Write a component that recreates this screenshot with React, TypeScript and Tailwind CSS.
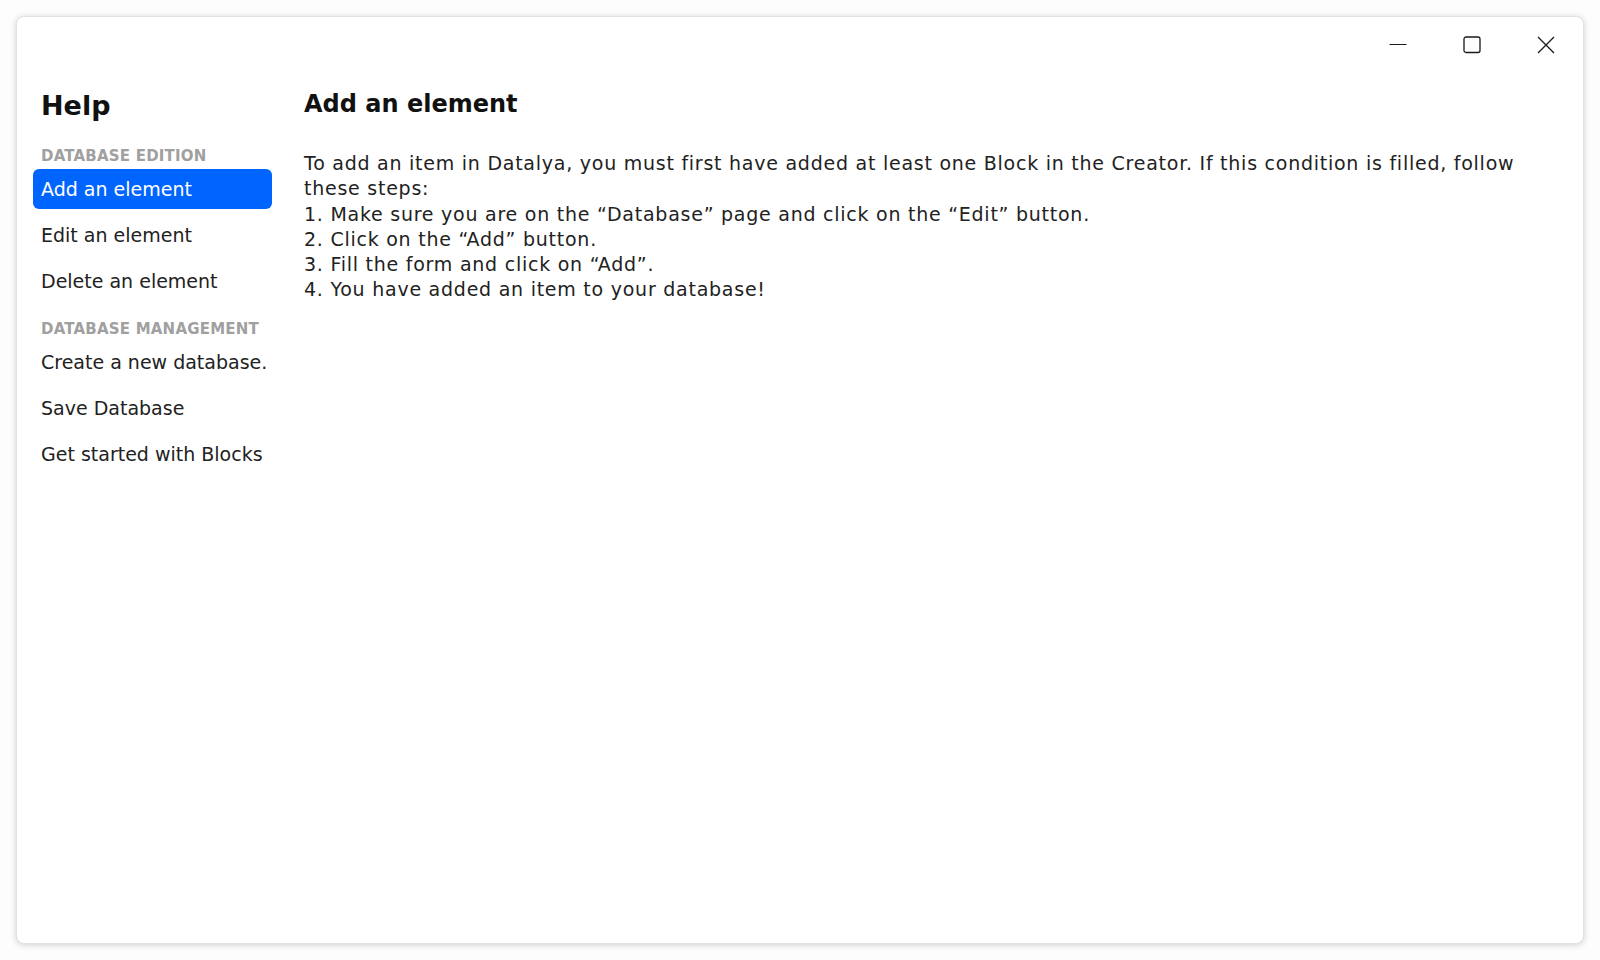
import React from "react";

const font = { fontFamily: '"DejaVu Sans", "Open Sans", sans-serif' };

function NavItem({ label, active }: { label: string; active?: boolean }) {
  return (
    <div
      className={
        "h-10 flex items-center px-2 rounded-md text-[19px] tracking-[0px] whitespace-nowrap " +
        (active ? "bg-[#0064ff] text-white" : "text-[#222222]")
      }
    >
      {label}
    </div>
  );
}

function SectionHeading({ label }: { label: string }) {
  return (
    <div className="px-2 h-5 flex items-center text-[15px] font-bold text-[#a0a0a0] tracking-[0.2px] whitespace-nowrap">
      {label}
    </div>
  );
}

export default function App() {
  return (
    <div className="h-screen w-full bg-[#fdfdfd] p-4" style={font}>
      <div className="h-full w-full bg-white rounded-lg border border-[#e2e2e2] shadow-[0_1px_6px_rgba(0,0,0,0.18)] flex flex-col">
        <div className="h-[57px] flex items-start justify-end pt-[19px] pr-0 shrink-0">
          <div className="w-[74px] flex items-center justify-center">
            <svg width="18" height="18" viewBox="0 0 18 18">
              <path d="M0.5 8.5 H17.5" stroke="#1a1a1a" strokeWidth="1" />
            </svg>
          </div>
          <div className="w-[74px] flex items-center justify-center">
            <svg width="18" height="18" viewBox="0 0 18 18">
              <rect x="1" y="1" width="16" height="15.5" rx="2" fill="none" stroke="#1a1a1a" strokeWidth="1.3" />
            </svg>
          </div>
          <div className="w-[74px] flex items-center justify-center">
            <svg width="18" height="18" viewBox="0 0 18 18">
              <path d="M1 1 L17 17 M17 1 L1 17" stroke="#1a1a1a" strokeWidth="1.3" />
            </svg>
          </div>
        </div>
        <div className="flex flex-1 min-h-0">
          <aside className="w-[271px] shrink-0 px-4">
            <h1 className="px-2 text-[27px] font-bold text-[#111] leading-[32px] tracking-[0px] mt-[16px]">Help</h1>
            <div className="mt-[24px]">
              <SectionHeading label="DATABASE EDITION" />
              <div className="mt-[3px] flex flex-col gap-[6px]">
                <NavItem label="Add an element" active />
                <NavItem label="Edit an element" />
                <NavItem label="Delete an element" />
              </div>
            </div>
            <div className="mt-[18px]">
              <SectionHeading label="DATABASE MANAGEMENT" />
              <div className="mt-[3px] flex flex-col gap-[6px]">
                <NavItem label="Create a new database." />
                <NavItem label="Save Database" />
                <NavItem label="Get started with Blocks" />
              </div>
            </div>
          </aside>
          <main className="flex-1 pl-4 pr-6">
            <h2 className="text-[24px] font-bold text-[#111] leading-[32px] tracking-[0px] mt-[14px]">Add an element</h2>
            <div className="mt-[31px] text-[19px] leading-[25.3px] text-[#222222] tracking-[0.75px] max-w-[1230px]">
              <p>
                To add an item in Datalya, you must first have added at least one Block in the Creator. If this condition is filled, follow these steps:
              </p>
              <p>1. Make sure you are on the “Database” page and click on the “Edit” button.</p>
              <p>2. Click on the “Add” button.</p>
              <p>3. Fill the form and click on “Add”.</p>
              <p>4. You have added an item to your database!</p>
            </div>
          </main>
        </div>
      </div>
    </div>
  );
}
